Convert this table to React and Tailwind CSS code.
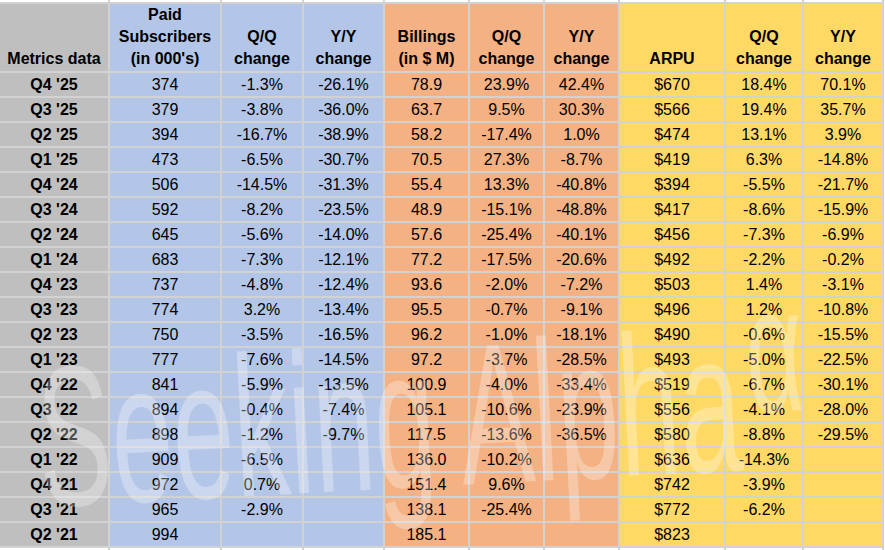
const ROWS = [
  ["Q4 '25", '374', '-1.3%', '-26.1%', '78.9', '23.9%', '42.4%', '$670', '18.4%', '70.1%'],
  ["Q3 '25", '379', '-3.8%', '-36.0%', '63.7', '9.5%', '30.3%', '$566', '19.4%', '35.7%'],
  ["Q2 '25", '394', '-16.7%', '-38.9%', '58.2', '-17.4%', '1.0%', '$474', '13.1%', '3.9%'],
  ["Q1 '25", '473', '-6.5%', '-30.7%', '70.5', '27.3%', '-8.7%', '$419', '6.3%', '-14.8%'],
  ["Q4 '24", '506', '-14.5%', '-31.3%', '55.4', '13.3%', '-40.8%', '$394', '-5.5%', '-21.7%'],
  ["Q3 '24", '592', '-8.2%', '-23.5%', '48.9', '-15.1%', '-48.8%', '$417', '-8.6%', '-15.9%'],
  ["Q2 '24", '645', '-5.6%', '-14.0%', '57.6', '-25.4%', '-40.1%', '$456', '-7.3%', '-6.9%'],
  ["Q1 '24", '683', '-7.3%', '-12.1%', '77.2', '-17.5%', '-20.6%', '$492', '-2.2%', '-0.2%'],
  ["Q4 '23", '737', '-4.8%', '-12.4%', '93.6', '-2.0%', '-7.2%', '$503', '1.4%', '-3.1%'],
  ["Q3 '23", '774', '3.2%', '-13.4%', '95.5', '-0.7%', '-9.1%', '$496', '1.2%', '-10.8%'],
  ["Q2 '23", '750', '-3.5%', '-16.5%', '96.2', '-1.0%', '-18.1%', '$490', '-0.6%', '-15.5%'],
  ["Q1 '23", '777', '-7.6%', '-14.5%', '97.2', '-3.7%', '-28.5%', '$493', '-5.0%', '-22.5%'],
  ["Q4 '22", '841', '-5.9%', '-13.5%', '100.9', '-4.0%', '-33.4%', '$519', '-6.7%', '-30.1%'],
  ["Q3 '22", '894', '-0.4%', '-7.4%', '105.1', '-10.6%', '-23.9%', '$556', '-4.1%', '-28.0%'],
  ["Q2 '22", '898', '-1.2%', '-9.7%', '117.5', '-13.6%', '-36.5%', '$580', '-8.8%', '-29.5%'],
  ["Q1 '22", '909', '-6.5%', '', '136.0', '-10.2%', '', '$636', '-14.3%', ''],
  ["Q4 '21", '972', '0.7%', '', '151.4', '9.6%', '', '$742', '-3.9%', ''],
  ["Q3 '21", '965', '-2.9%', '', '138.1', '-25.4%', '', '$772', '-6.2%', ''],
  ["Q2 '21", '994', '', '', '185.1', '', '', '$823', '', ''],
];

const HEADERS = [
  ['Metrics data'],
  ['Paid', 'Subscribers', "(in 000's)"],
  ['Q/Q', 'change'],
  ['Y/Y', 'change'],
  ['Billings', '(in $ M)'],
  ['Q/Q', 'change'],
  ['Y/Y', 'change'],
  ['ARPU'],
  ['Q/Q', 'change'],
  ['Y/Y', 'change'],
];

// fill per column: label, 3 subscriber cols, 3 billing cols, 3 arpu cols
const FILLS = [
  'bg-[#bfbfbf]',
  'bg-[#b4c6e7]', 'bg-[#b4c6e7]', 'bg-[#b4c6e7]',
  'bg-[#f4b183]', 'bg-[#f4b183]', 'bg-[#f4b183]',
  'bg-[#ffd966]', 'bg-[#ffd966]', 'bg-[#ffd966]',
];

export default function App() {
  return (
    <div className="relative h-[550px] w-[885px] overflow-hidden bg-white font-['Liberation_Sans',Arial,sans-serif] text-[16px] text-black">
      <div className="grid w-fit grid-cols-[108px_110px_80px_79px_83px_73px_73px_104px_76px_78px] gap-[2px] bg-[#d2d2d2] pr-[2px]">
        {FILLS.map((_, i) => (
          <div key={`top-${i}`} className="h-[2px] bg-white" />
        ))}

        {HEADERS.map((lines, i) => (
          <div key={`h-${i}`} className={`flex h-[67px] flex-col items-center justify-end pb-[1px] text-center font-bold leading-[22px] ${FILLS[i]}`}>
            {lines.map((line) => (
              <span key={line} className="whitespace-nowrap">{line}</span>
            ))}
          </div>
        ))}

        {ROWS.map((row) =>
          row.map((cell, i) => (
            <div key={`${row[0]}-${i}`} className={`h-[23px] whitespace-nowrap pt-[1px] text-center leading-[22px] ${FILLS[i]} ${i === 0 ? 'font-bold' : ''}`}>
              {cell}
            </div>
          )),
        )}

        {FILLS.map((_, i) => (
          <div key={`bot-${i}`} className="h-[2px] bg-white" />
        ))}
      </div>

      {/* watermark */}
      <div className="pointer-events-none absolute left-[38px] top-[338px] flex origin-left -rotate-[3deg] scale-x-[0.55] items-start whitespace-nowrap text-[200px] leading-none text-white/30">
        <span>Seeking Alpha</span>
        <span className="-mt-[40px] ml-[14px] text-[180px]">α</span>
      </div>
    </div>
  );
}
